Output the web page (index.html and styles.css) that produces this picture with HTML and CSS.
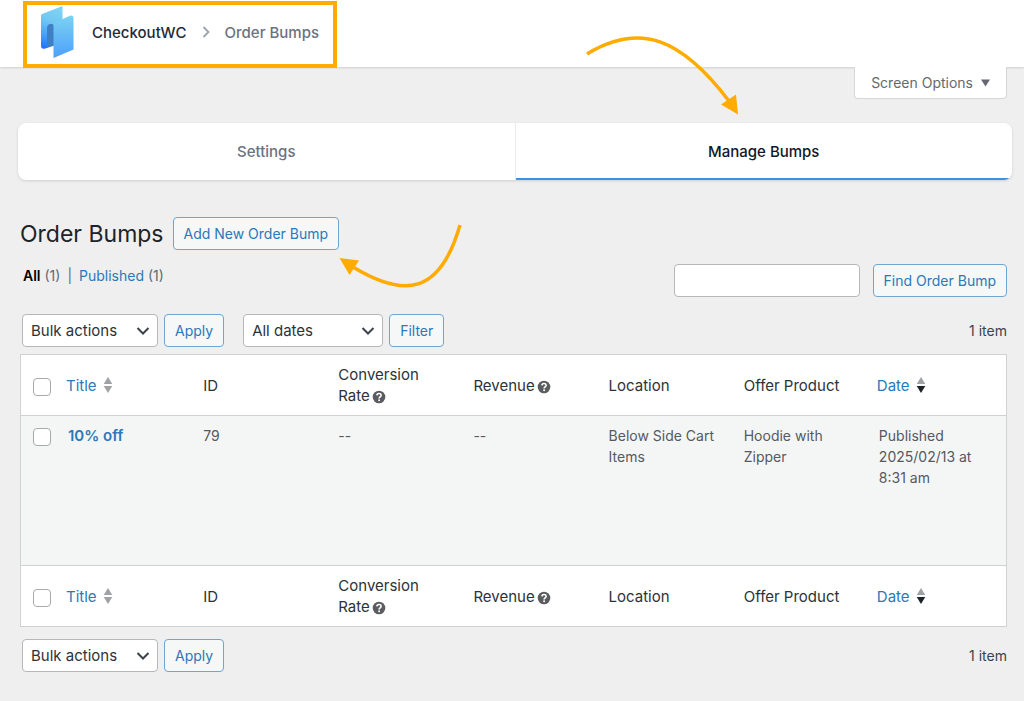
FILE: index.html
```html
<!DOCTYPE html>
<html lang="en">
<head>
<meta charset="utf-8">
<title>Order Bumps – CheckoutWC</title>
<meta name="viewport" content="width=device-width, initial-scale=1">
<link rel="stylesheet" href="styles.css">
</head>
<body>
<svg class="sprite" aria-hidden="true">
  <symbol id="chevron" viewBox="0 0 14 10"><path d="M1.500 2l5.500 5.500L12.500 2" fill="none" stroke="#3c434a" stroke-width="2"/></symbol>
  <symbol id="sort" viewBox="0 0 10 16"><path class="up" d="M5 0l4.300 7H.7z"/><path class="down" d="M5 16l4.300-7H.7z"/></symbol>
  <symbol id="help" viewBox="0 0 14 14"><circle cx="7" cy="7" r="6.300" fill="#5a5c5f"/><path d="M4.900 5.400c.1-2.700 4.300-2.500 4.200 0 0 1.500-2 1.500-2 3" fill="none" stroke="#fff" stroke-width="1.600"/><circle cx="7.100" cy="10.300" r="1" fill="#fff"/></symbol>
</svg>

<header class="topbar">
  <nav class="breadcrumb" aria-label="Breadcrumb">
    <svg class="logo" viewBox="0 0 34 52" aria-hidden="true">
      <defs>
        <linearGradient id="back" gradientUnits="userSpaceOnUse" x1="16" y1="2" x2="4" y2="42"><stop offset="0" stop-color="#7fd3f2"/><stop offset=".35" stop-color="#70c6f1"/><stop offset=".7" stop-color="#4a9ff5"/><stop offset="1" stop-color="#1f72fa"/></linearGradient>
        <linearGradient id="front" x1="0.500" y1="0" x2="0.500" y2="1"><stop offset="0" stop-color="#7bd2f1"/><stop offset="1" stop-color="#4da0fb"/></linearGradient>
      </defs>
      <path d="M1 9.500Q1 8.500 2 8L22.500 0V37L5 42.500Q1 43.500 1 39.500z" fill="url(#back)"/>
      <path d="M7 21.500Q7.500 18 10.500 18H16V38.500L5 42.500Q7 41 7 38z" fill="#3f7fc4"/>
      <path d="M12 17.700L30 9.700Q33.500 8.500 33.500 12V43.500L13.500 52V20Q13.500 18 12 17.700z" fill="url(#front)"/>
    </svg>
    <a class="brand" href="#">CheckoutWC</a>
    <svg class="separator" viewBox="0 0 8 12" aria-hidden="true"><path d="M1.500 1l5 5-5 5" fill="none" stroke="#9ca3af" stroke-width="1.800"/></svg>
    <a class="crumb" href="#" aria-current="page">Order Bumps</a>
  </nav>
</header>

<main class="page">
  <div class="screen-meta"><button class="screen-options" type="button">Screen Options <svg viewBox="0 0 9 8" aria-hidden="true"><path d="M0 0.500h9L4.500 7.500z" fill="#646970"/></svg></button></div>

  <nav class="tabs" aria-label="Sections">
    <a class="tab" href="#">Settings</a>
    <a class="tab active" href="#" aria-current="page">Manage Bumps</a>
  </nav>

  <div class="content">
    <div class="heading">
      <h1>Order Bumps</h1>
      <a class="button" href="#">Add New Order Bump</a>
    </div>

    <div class="views">
      <div class="filters"><a class="current" href="#">All</a> <span>(1)</span><span class="bar">|</span><a href="#">Published</a> <span>(1)</span></div>
      <form class="search">
        <input type="search" aria-label="Search order bumps">
        <button class="button" type="button">Find Order Bump</button>
      </form>
    </div>

    <div class="tablenav">
      <span class="select bulk"><select aria-label="Bulk actions"><option>Bulk actions</option></select><svg><use href="#chevron"/></svg></span>
      <button class="button" type="button">Apply</button>
      <span class="select dates"><select aria-label="Filter by date"><option>All dates</option></select><svg><use href="#chevron"/></svg></span>
      <button class="button" type="button">Filter</button>
      <span class="count">1 item</span>
    </div>

    <table class="bumps">
      <thead>
        <tr>
          <th class="check"><input type="checkbox" aria-label="Select all"></th>
          <th class="sortable"><a href="#">Title<svg class="sort"><use href="#sort"/></svg></a></th>
          <th>ID</th>
          <th>Conversion <span class="keep">Rate<svg class="help"><use href="#help"/></svg></span></th>
          <th>Revenue<svg class="help"><use href="#help"/></svg></th>
          <th>Location</th>
          <th>Offer Product</th>
          <th class="sortable"><a href="#">Date<svg class="sort descending"><use href="#sort"/></svg></a></th>
        </tr>
      </thead>
      <tbody>
        <tr>
          <td class="check"><input type="checkbox" aria-label="Select 10% off"></td>
          <td><a class="row-title" href="#">10% off</a></td>
          <td>79</td>
          <td>--</td>
          <td>--</td>
          <td>Below Side Cart Items</td>
          <td>Hoodie with Zipper</td>
          <td>Published<br>2025/02/13 at 8:31 am</td>
        </tr>
      </tbody>
      <tfoot>
        <tr>
          <th class="check"><input type="checkbox" aria-label="Select all"></th>
          <th class="sortable"><a href="#">Title<svg class="sort"><use href="#sort"/></svg></a></th>
          <th>ID</th>
          <th>Conversion <span class="keep">Rate<svg class="help"><use href="#help"/></svg></span></th>
          <th>Revenue<svg class="help"><use href="#help"/></svg></th>
          <th>Location</th>
          <th>Offer Product</th>
          <th class="sortable"><a href="#">Date<svg class="sort descending"><use href="#sort"/></svg></a></th>
        </tr>
      </tfoot>
    </table>

    <div class="tablenav bottom">
      <span class="select bulk"><select aria-label="Bulk actions"><option>Bulk actions</option></select><svg><use href="#chevron"/></svg></span>
      <button class="button" type="button">Apply</button>
      <span class="count">1 item</span>
    </div>
  </div>
</main>

<svg class="arrows" viewBox="0 0 1024 701" aria-hidden="true">
  <g fill="none" stroke="#ffab00" stroke-width="3.500">
    <path d="M587 54C640 22 681 38 729 101"/>
    <path d="M460 225C440 295 404 298 353 267"/>
  </g>
  <path d="M738 114.500L721 104.500 736 94.500z" fill="#ffab00"/>
  <path d="M339.500 258L359 260.500 349.500 275z" fill="#ffab00"/>
</svg>
</body>
</html>
```
FILE: styles.css
```css
* { box-sizing: border-box; }

body {
  margin: 0;
  position: relative;
  min-height: 100vh;
  background: #efefef;
  color: #3c434a;
  font: 15px/21px Inter, "Liberation Sans", sans-serif;
}

a { color: #2c78b9; text-decoration: none; }
button, input, select { font: inherit; }
.sprite { position: absolute; width: 0; height: 0; }

/* Top bar */
.topbar {
  display: flex;
  height: 67px;
  padding-left: 23px;
  background: #fff;
  box-shadow: 0 1px 2px #0002;
}
.breadcrumb {
  display: flex;
  align-items: center;
  height: 67px;
  margin-top: 1px;
  padding: 0 14px 5px 13px;
  border: 4px solid #ffab00;
  font-weight: 500;
}
.logo { width: 34px; height: 52px; margin-right: 18px; }
.brand { color: #1f2937; }
.separator { width: 8px; height: 12px; margin: 0 15px; }
.crumb { color: #6b7280; }

/* Screen options */
.page { padding: 0 12px 28px 18px; }
.screen-meta { display: flex; justify-content: flex-end; padding-right: 5px; }
.screen-options {
  display: flex;
  align-items: center;
  gap: 8px;
  height: 32px;
  padding: 0 16px;
  border: 1px solid #d5d6d8;
  border-top: 0;
  border-radius: 0 0 4px 4px;
  background: #fff;
  color: #646970;
  font-size: 14px;
}
.screen-options svg { width: 9px; height: 8px; }

/* Tabs */
.tabs {
  display: flex;
  height: 57px;
  margin-top: 24px;
  overflow: hidden;
  border-radius: 8px;
  background: #fff;
  box-shadow: 0 1px 3px #0002;
}
.tab {
  flex: 1;
  display: flex;
  align-items: center;
  justify-content: center;
  color: #6b7280;
  font-weight: 500;
}
.tab.active {
  border-left: 1px solid #e8eaed;
  box-shadow: inset 0 -2px #3f91df;
  color: #111827;
}

/* Heading */
.content { padding: 37px 5px 0 2px; }
.heading { display: flex; align-items: center; gap: 9px; }
h1 { margin: 0; color: #1d2327; font-size: 23px; font-weight: 400; line-height: 32px; }
.button {
  display: inline-flex;
  align-items: center;
  justify-content: center;
  height: 33px;
  padding: 0 10px;
  border: 1px solid #6ea5d3;
  border-radius: 4px;
  background: #f6f7f7;
  color: #2c78b9;
  font-size: 14px;
  white-space: nowrap;
}

.views { display: flex; justify-content: space-between; margin-top: 14px; }
.filters { padding-left: 3px; color: #646970; font-size: 14px; line-height: 24px; }
.filters .current { color: #000; font-weight: 600; }
.bar { padding: 0 7px; }
.search { display: flex; gap: 13px; }
.search input {
  width: 186px;
  height: 33px;
  padding: 0 8px;
  border: 1px solid #b5b7ba;
  border-radius: 4px;
  background: #fff;
}

/* Table navigation */
.tablenav { display: flex; align-items: center; gap: 6px; margin: 17px 0 7px; padding-left: 2px; }
.tablenav.bottom { margin: 12px 0 0; }
.select { display: grid; align-items: center; }
.select > * { grid-area: 1 / 1; }
.select svg { justify-self: end; width: 14px; height: 10px; margin-right: 8px; pointer-events: none; }
.select select {
  appearance: none;
  width: 100%;
  height: 33px;
  padding: 0 28px 0 8px;
  border: 1px solid #b5b7ba;
  border-radius: 4px;
  background: #fff;
  color: #2c3338;
}
.bulk { width: 136px; }
.dates { width: 140px; margin-left: 13px; }
.count { margin-left: auto; font-size: 14px; }

/* List table */
.bumps {
  width: 100%;
  table-layout: fixed;
  border-collapse: separate;
  border-spacing: 0;
  border: 1px solid #cfd1d3;
  background: #fff;
}
.bumps th {
  height: 61px;
  padding: 8px;
  color: #2c3338;
  font-weight: 400;
  text-align: left;
  vertical-align: middle;
}
.bumps .sortable { padding-left: 6px; }
.bumps thead th { border-bottom: 1px solid #cfd1d3; }
.bumps tfoot th { border-top: 1px solid #cfd1d3; }
.bumps td {
  height: 149px;
  padding: 9px 8px;
  background: #f4f6f6;
  color: #56595e;
  font-size: 14px;
  vertical-align: top;
}
.bumps .check { width: 39px; padding: 12px 0 0 12px; }
.bumps th.check { padding-top: 3px; }
.check input {
  appearance: none;
  display: block;
  width: 18px;
  height: 18px;
  margin: 0;
  border: 1px solid #a7aaad;
  border-radius: 4px;
  background: #fff;
}
.check input:checked { background: #2c78b9; }
.row-title { font-size: 15px; font-weight: 600; }
.keep { white-space: nowrap; }
.help { width: 14px; height: 14px; margin-left: 2px; vertical-align: -3px; }
.sort { width: 10px; height: 16px; margin-left: 6px; vertical-align: -2px; --down: #a0a3a6; }
.sort.descending { --down: #1d2327; }
.up { fill: #a0a3a6; }
.down { fill: var(--down); }

/* Callout arrows */
.arrows { position: absolute; top: 0; left: 0; width: 1024px; height: 701px; pointer-events: none; }
```
